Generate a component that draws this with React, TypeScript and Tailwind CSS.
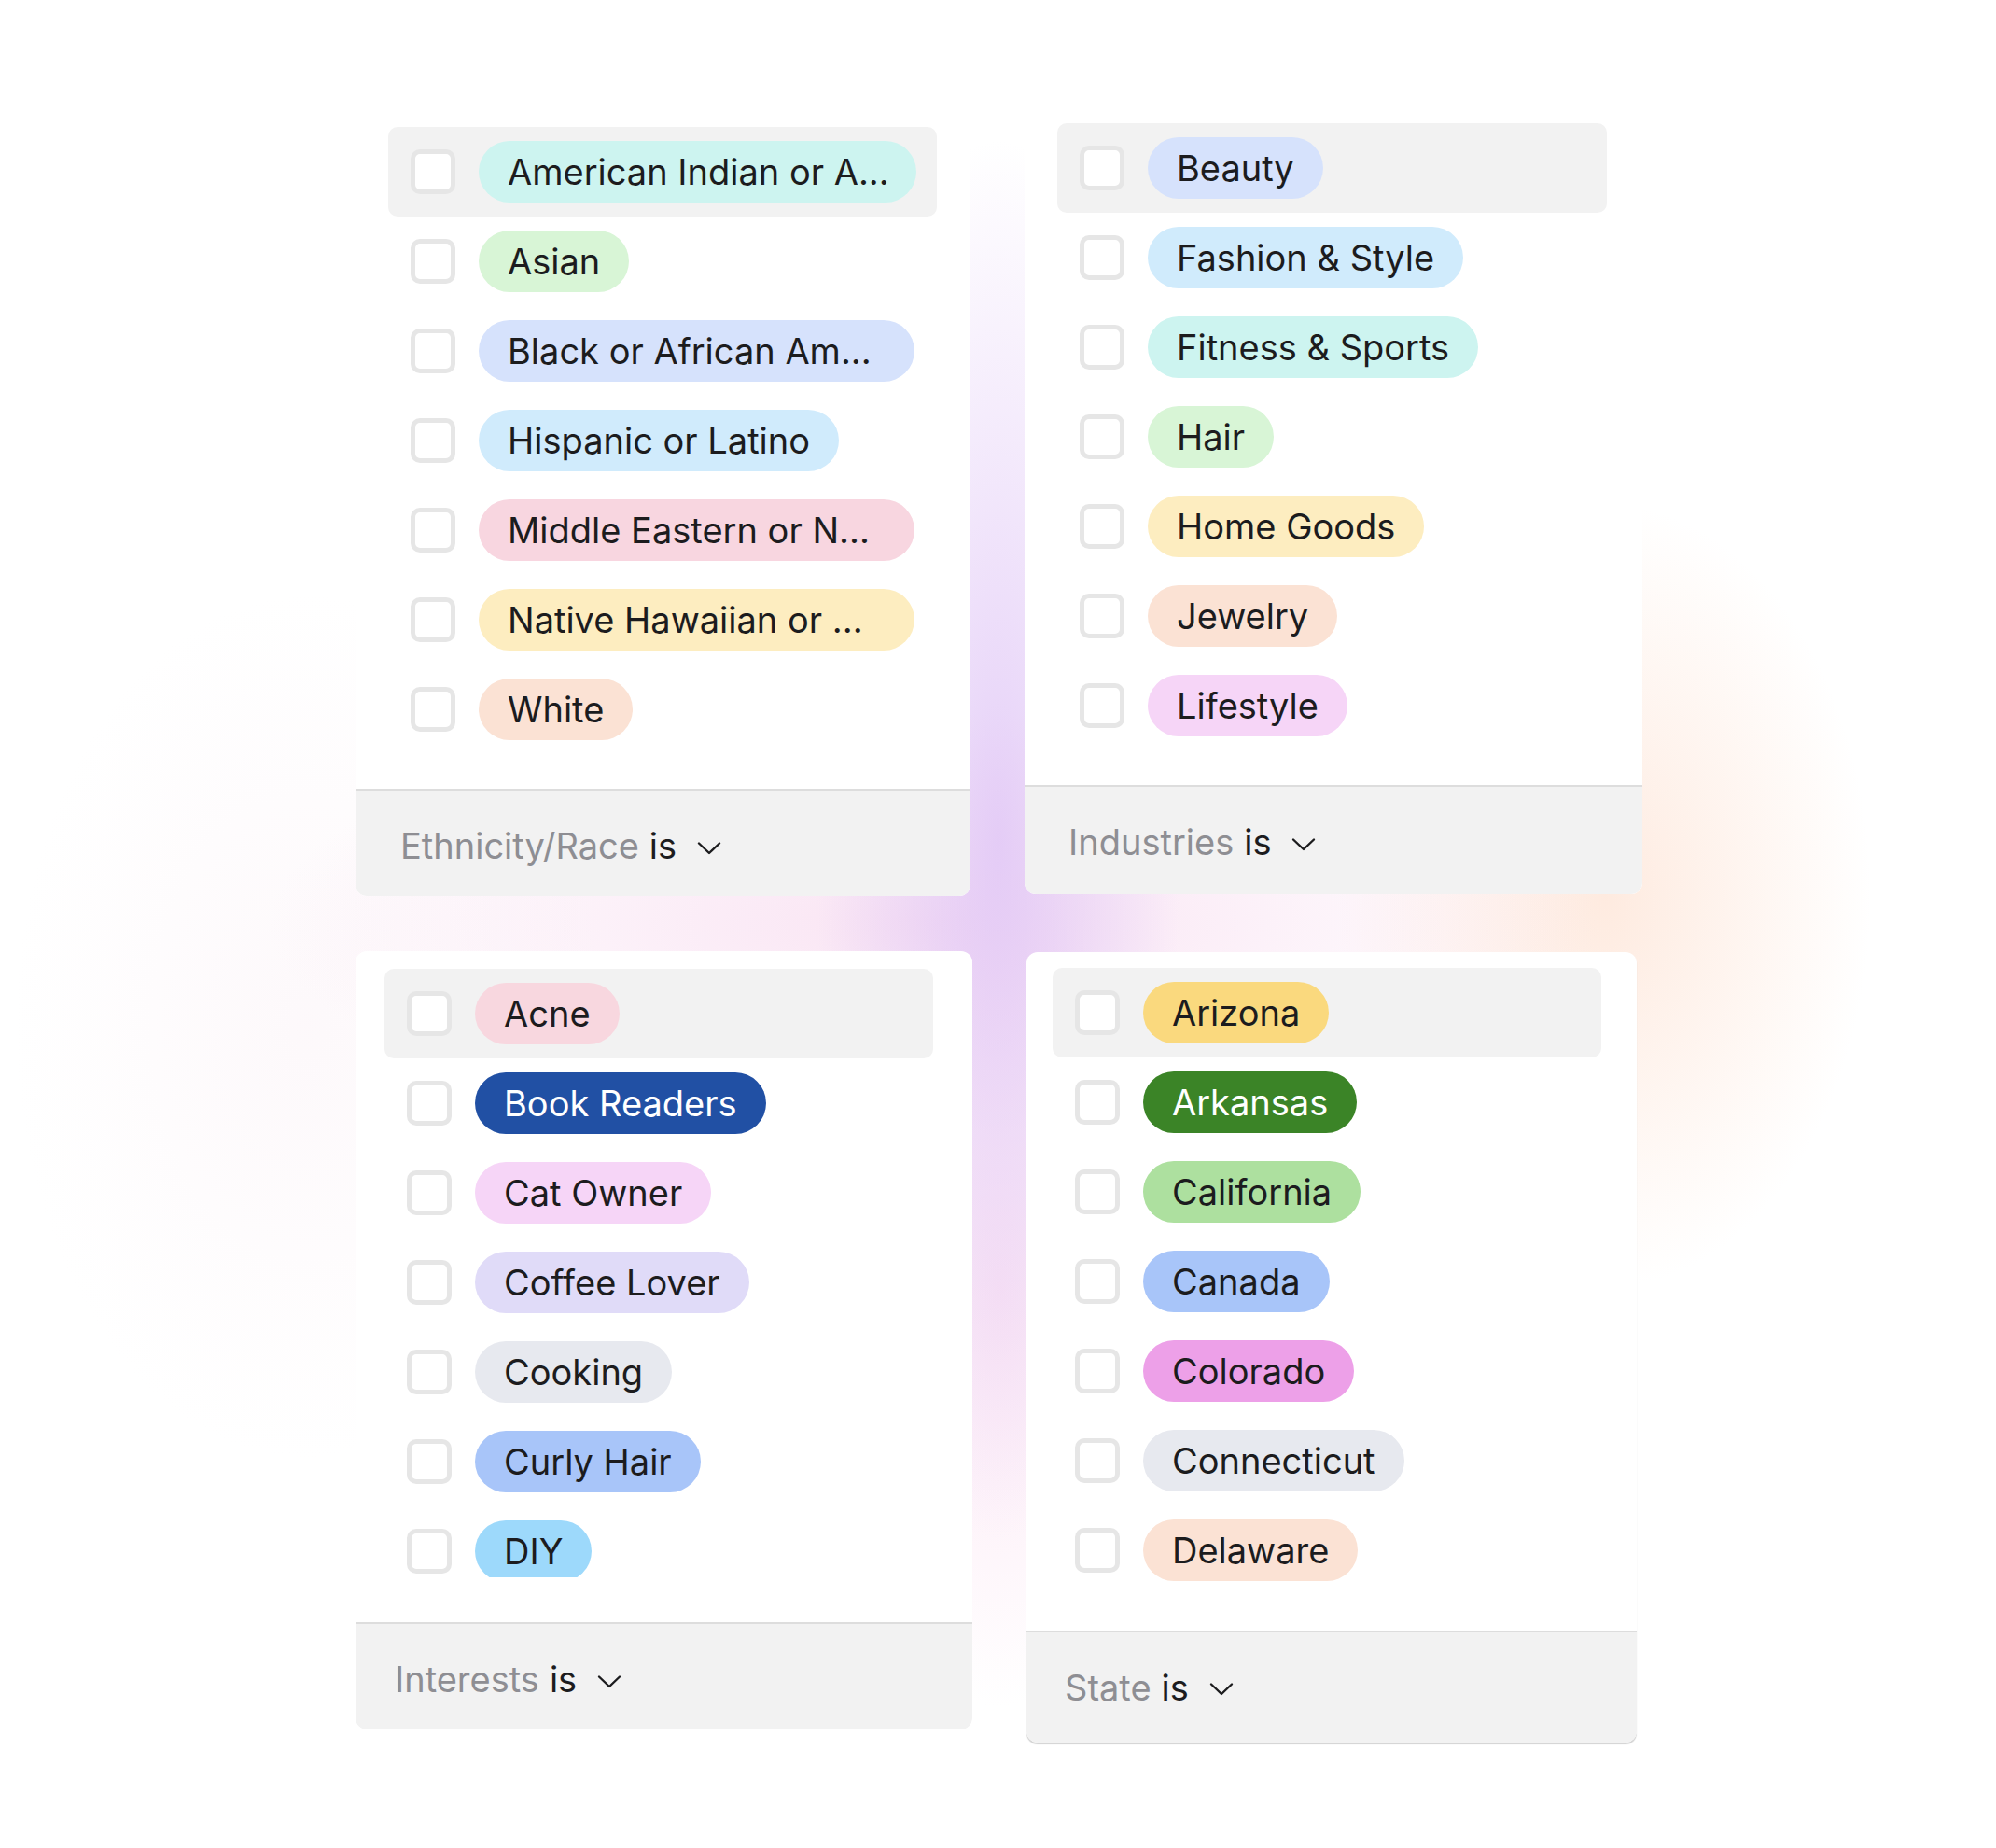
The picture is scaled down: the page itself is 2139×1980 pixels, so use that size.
import { type ReactNode } from "react";

type Tag = {
  label: string;
  bg: string;
  text?: string;
  wide?: boolean;
};

const ethnicity: Tag[] = [
  { label: "American Indian or A...", bg: "bg-[#cdf4f0]", wide: true },
  { label: "Asian", bg: "bg-[#d8f5d6]" },
  { label: "Black or African Am...", bg: "bg-[#d6e2fc]", wide: true },
  { label: "Hispanic or Latino", bg: "bg-[#d0ebfc]" },
  { label: "Middle Eastern or N...", bg: "bg-[#f8d6e0]", wide: true },
  { label: "Native Hawaiian or ...", bg: "bg-[#fdedc0]", wide: true },
  { label: "White", bg: "bg-[#fbe2d4]" },
];

const industries: Tag[] = [
  { label: "Beauty", bg: "bg-[#d6e2fc]" },
  { label: "Fashion & Style", bg: "bg-[#d0ebfc]" },
  { label: "Fitness & Sports", bg: "bg-[#cdf4f0]" },
  { label: "Hair", bg: "bg-[#d8f5d6]" },
  { label: "Home Goods", bg: "bg-[#fdedc0]" },
  { label: "Jewelry", bg: "bg-[#fbe2d4]" },
  { label: "Lifestyle", bg: "bg-[#f6d5f7]" },
];

const interests: Tag[] = [
  { label: "Acne", bg: "bg-[#f8d7df]" },
  { label: "Book Readers", bg: "bg-[#2150a4]", text: "text-white" },
  { label: "Cat Owner", bg: "bg-[#f6d5f7]" },
  { label: "Coffee Lover", bg: "bg-[#e0dbf8]" },
  { label: "Cooking", bg: "bg-[#e7e9ef]" },
  { label: "Curly Hair", bg: "bg-[#a8c5f9]" },
  { label: "DIY", bg: "bg-[#9dd9fb]" },
];

const states: Tag[] = [
  { label: "Arizona", bg: "bg-[#fad97e]" },
  { label: "Arkansas", bg: "bg-[#3b8427]", text: "text-white" },
  { label: "California", bg: "bg-[#ade09f]" },
  { label: "Canada", bg: "bg-[#a8c5f9]" },
  { label: "Colorado", bg: "bg-[#eda0e8]" },
  { label: "Connecticut", bg: "bg-[#e7e9ef]" },
  { label: "Delaware", bg: "bg-[#fbe2d4]" },
];

const Chevron = () => (
  <svg width="26" height="16" viewBox="0 0 26 16" fill="none" className="ml-[22px] mt-[4px]">
    <path d="M2 2.5 L13 13 L24 2.5" stroke="#1c1c1e" strokeWidth="2.4" strokeLinecap="round" strokeLinejoin="round" />
  </svg>
);

const Row = ({ tag, active }: { tag: Tag; active?: boolean }) => (
  <div
    className={`flex h-[96px] shrink-0 items-center rounded-[10px] px-[24px] ${
      active ? "bg-[#f2f2f2]" : ""
    }`}
  >
    <div className="h-[48px] w-[48px] shrink-0 rounded-[10px] border-[5px] border-[#e6e6e6] bg-white" />
    <span
      className={`ml-[25px] flex h-[66px] items-center whitespace-nowrap rounded-full px-[31px] text-[38px] leading-none ${
        tag.bg
      } ${tag.text ?? "text-[#1c1c1e]"} ${tag.wide ? "w-[469px]" : ""}`}
    >
      {tag.label}
    </span>
  </div>
);

interface CardProps {
  tags: Tag[];
  field: string;
  className: string;
  listClass: string;
  footerClass: string;
  children?: ReactNode;
}

const FilterCard = ({ tags, field, className, listClass, footerClass }: CardProps) => (
  <div className={`flex flex-col overflow-hidden rounded-[12px] bg-white ${className}`}>
    <div className={`flex flex-col overflow-hidden ${listClass}`}>
      {tags.map((t, i) => (
        <Row key={t.label} tag={t} active={i === 0} />
      ))}
    </div>
    <div
      className={`flex items-center rounded-b-[12px] border-t-2 border-[#dddddd] bg-[#f2f2f2] text-[38px] ${footerClass}`}
    >
      <span className="text-[#8e8e93]">{field}</span>
      <span className="ml-[11px] text-[#1c1c1e]">is</span>
      <Chevron />
    </div>
  </div>
);

export default function App() {
  return (
    <main className="min-h-[1980px] w-full bg-white bg-[radial-gradient(ellipse_260px_1000px_at_1070px_900px,rgba(224,198,246,0.85),rgba(255,255,255,0)_75%),radial-gradient(ellipse_220px_600px_at_1072px_1380px,rgba(250,214,236,0.6),rgba(255,255,255,0)_75%),radial-gradient(ellipse_950px_300px_at_1000px_990px,rgba(246,212,236,0.65),rgba(255,255,255,0)_75%),radial-gradient(ellipse_380px_560px_at_1720px_960px,rgba(253,214,192,0.5),rgba(255,255,255,0)_75%),radial-gradient(ellipse_420px_620px_at_330px_1100px,rgba(246,226,236,0.22),rgba(255,255,255,0)_75%)] font-['Inter','Noto_Sans',sans-serif]">
      <div className="flex flex-col pl-[381px] pt-[113px]">
        {/* top row */}
        <div className="flex items-start gap-[58px]">
          <FilterCard
            tags={ethnicity}
            field="Ethnicity/Race"
            className="mt-[4px] w-[659px]"
            listClass="pl-[35px] pr-[36px] pt-[19px] pb-[37px]"
            footerClass="h-[115px] pl-[48px] pt-[6px]"
          />
          <FilterCard
            tags={industries}
            field="Industries"
            className="w-[662px]"
            listClass="pl-[35px] pr-[38px] pt-[19px] pb-[37px]"
            footerClass="h-[117px] pl-[47px] pt-[4px]"
          />
        </div>

        {/* bottom row */}
        <div className="mt-[59px] flex items-start gap-[58px]">
          <FilterCard
            tags={interests}
            field="Interests"
            className="w-[661px]"
            listClass="ml-[31px] mr-[42px] mt-[19px] mb-[48px] h-[652px]"
            footerClass="h-[115px] pl-[42px] pt-[6px]"
          />
          <FilterCard
            tags={states}
            field="State"
            className="mt-[1px] w-[654px] shadow-[0_2px_1px_rgba(0,0,0,0.18)]"
            listClass="pl-[28px] pr-[38px] pt-[17px] pb-[38px]"
            footerClass="h-[120px] pl-[41px]"
          />
        </div>
      </div>
    </main>
  );
}
